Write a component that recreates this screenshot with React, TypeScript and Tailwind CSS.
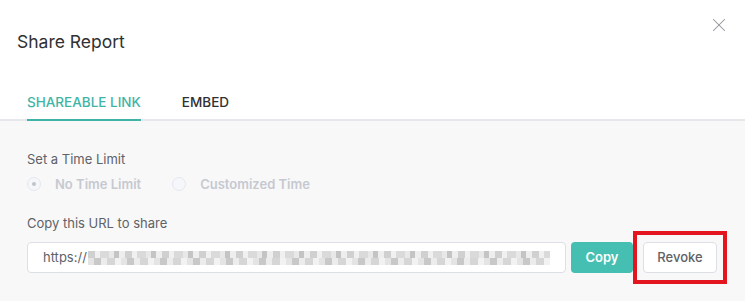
import { X } from 'lucide-react'

function Radio({ label, checked }: { label: string; checked?: boolean }) {
  return (
    <label className="flex items-center gap-[14px] cursor-not-allowed">
      <span className="flex h-[14px] w-[14px] items-center justify-center rounded-full border border-[#e4e7ed] bg-[#f5f7fa]">
        {checked && <span className="h-[4px] w-[4px] rounded-full bg-[#c0c4cc]" />}
      </span>
      <span className="text-[13px] font-semibold leading-5 text-[#c6c9d0]">{label}</span>
    </label>
  )
}

export default function App() {
  return (
    <div className="relative h-[301px] w-[745px] overflow-hidden bg-white font-['Inter',sans-serif]">
      {/* Header */}
      <div className="px-[17px] pt-[30px]">
        <h2 className="text-[17.5px] leading-6 text-[#303133]">Share Report</h2>
      </div>
      <button className="absolute right-[15px] top-[14px] text-[#909399]">
        <X className="h-[22px] w-[22px]" strokeWidth={1.1} />
      </button>

      {/* Tabs */}
      <div className="mt-[38px] flex gap-[41px] border-b-2 border-[#e6e7ea] px-[27px]">
        <div className="-mb-[2px] border-b-2 border-[#3fb4a6] pb-[7px] text-[13.5px] font-medium leading-5 text-[#3fb4a6]">
          SHAREABLE LINK
        </div>
        <div className="-mb-[2px] pb-[7px] text-[13.5px] font-medium leading-5 text-[#303133]">EMBED</div>
      </div>

      {/* Content */}
      <div className="h-full bg-[#f8f8f9] px-[27px] pt-[28px]">
        <div className="text-[13px] leading-5 text-[#606266]">Set a Time Limit</div>
        <div className="mt-[5px] flex items-center gap-[31px]">
          <Radio label="No Time Limit" checked />
          <Radio label="Customized Time" />
        </div>

        <div className="mt-[19px] text-[13px] leading-5 text-[#606266]">Copy this URL to share</div>
        <div className="mt-[9px] flex items-center">
          <div className="flex h-[31px] w-[539px] items-center overflow-hidden rounded-[4px] border border-[#dcdfe6] bg-white px-[15px] text-[13px] text-[#606266]">
            <span>https://</span>
            {/* blurred link */}
            <span className="ml-[1px] flex h-[14px] flex-1 flex-col">
              <span className="h-[7px] bg-[repeating-linear-gradient(90deg,#d0d0d0_0px,#d0d0d0_7px,#f0f0f0_7px,#f0f0f0_12px,#dadada_12px,#dadada_21px,#e8e8e8_21px,#e8e8e8_26px,#c4c4c4_26px,#c4c4c4_31px,#eeeeee_31px,#eeeeee_37px)]" />
              <span className="h-[7px] bg-[repeating-linear-gradient(90deg,#e4e4e4_0px,#e4e4e4_6px,#c8c8c8_6px,#c8c8c8_13px,#ececec_13px,#ececec_19px,#d6d6d6_19px,#d6d6d6_27px,#f2f2f2_27px,#f2f2f2_33px)]" />
            </span>
          </div>
          <button className="ml-[5px] h-[31px] w-[62px] rounded-[4px] bg-[#45bfb1] text-[13px] font-semibold text-white">
            Copy
          </button>
          <div className="relative ml-[10px]">
            <button className="h-[31px] w-[74px] rounded-[4px] border border-[#dcdfe6] bg-white text-[13px] font-medium text-[#606266]">
              Revoke
            </button>
            <span className="pointer-events-none absolute -bottom-[11px] -left-[10px] -right-[10px] -top-[11px] border-4 border-[#e3161f]" />
          </div>
        </div>
      </div>
    </div>
  )
}
